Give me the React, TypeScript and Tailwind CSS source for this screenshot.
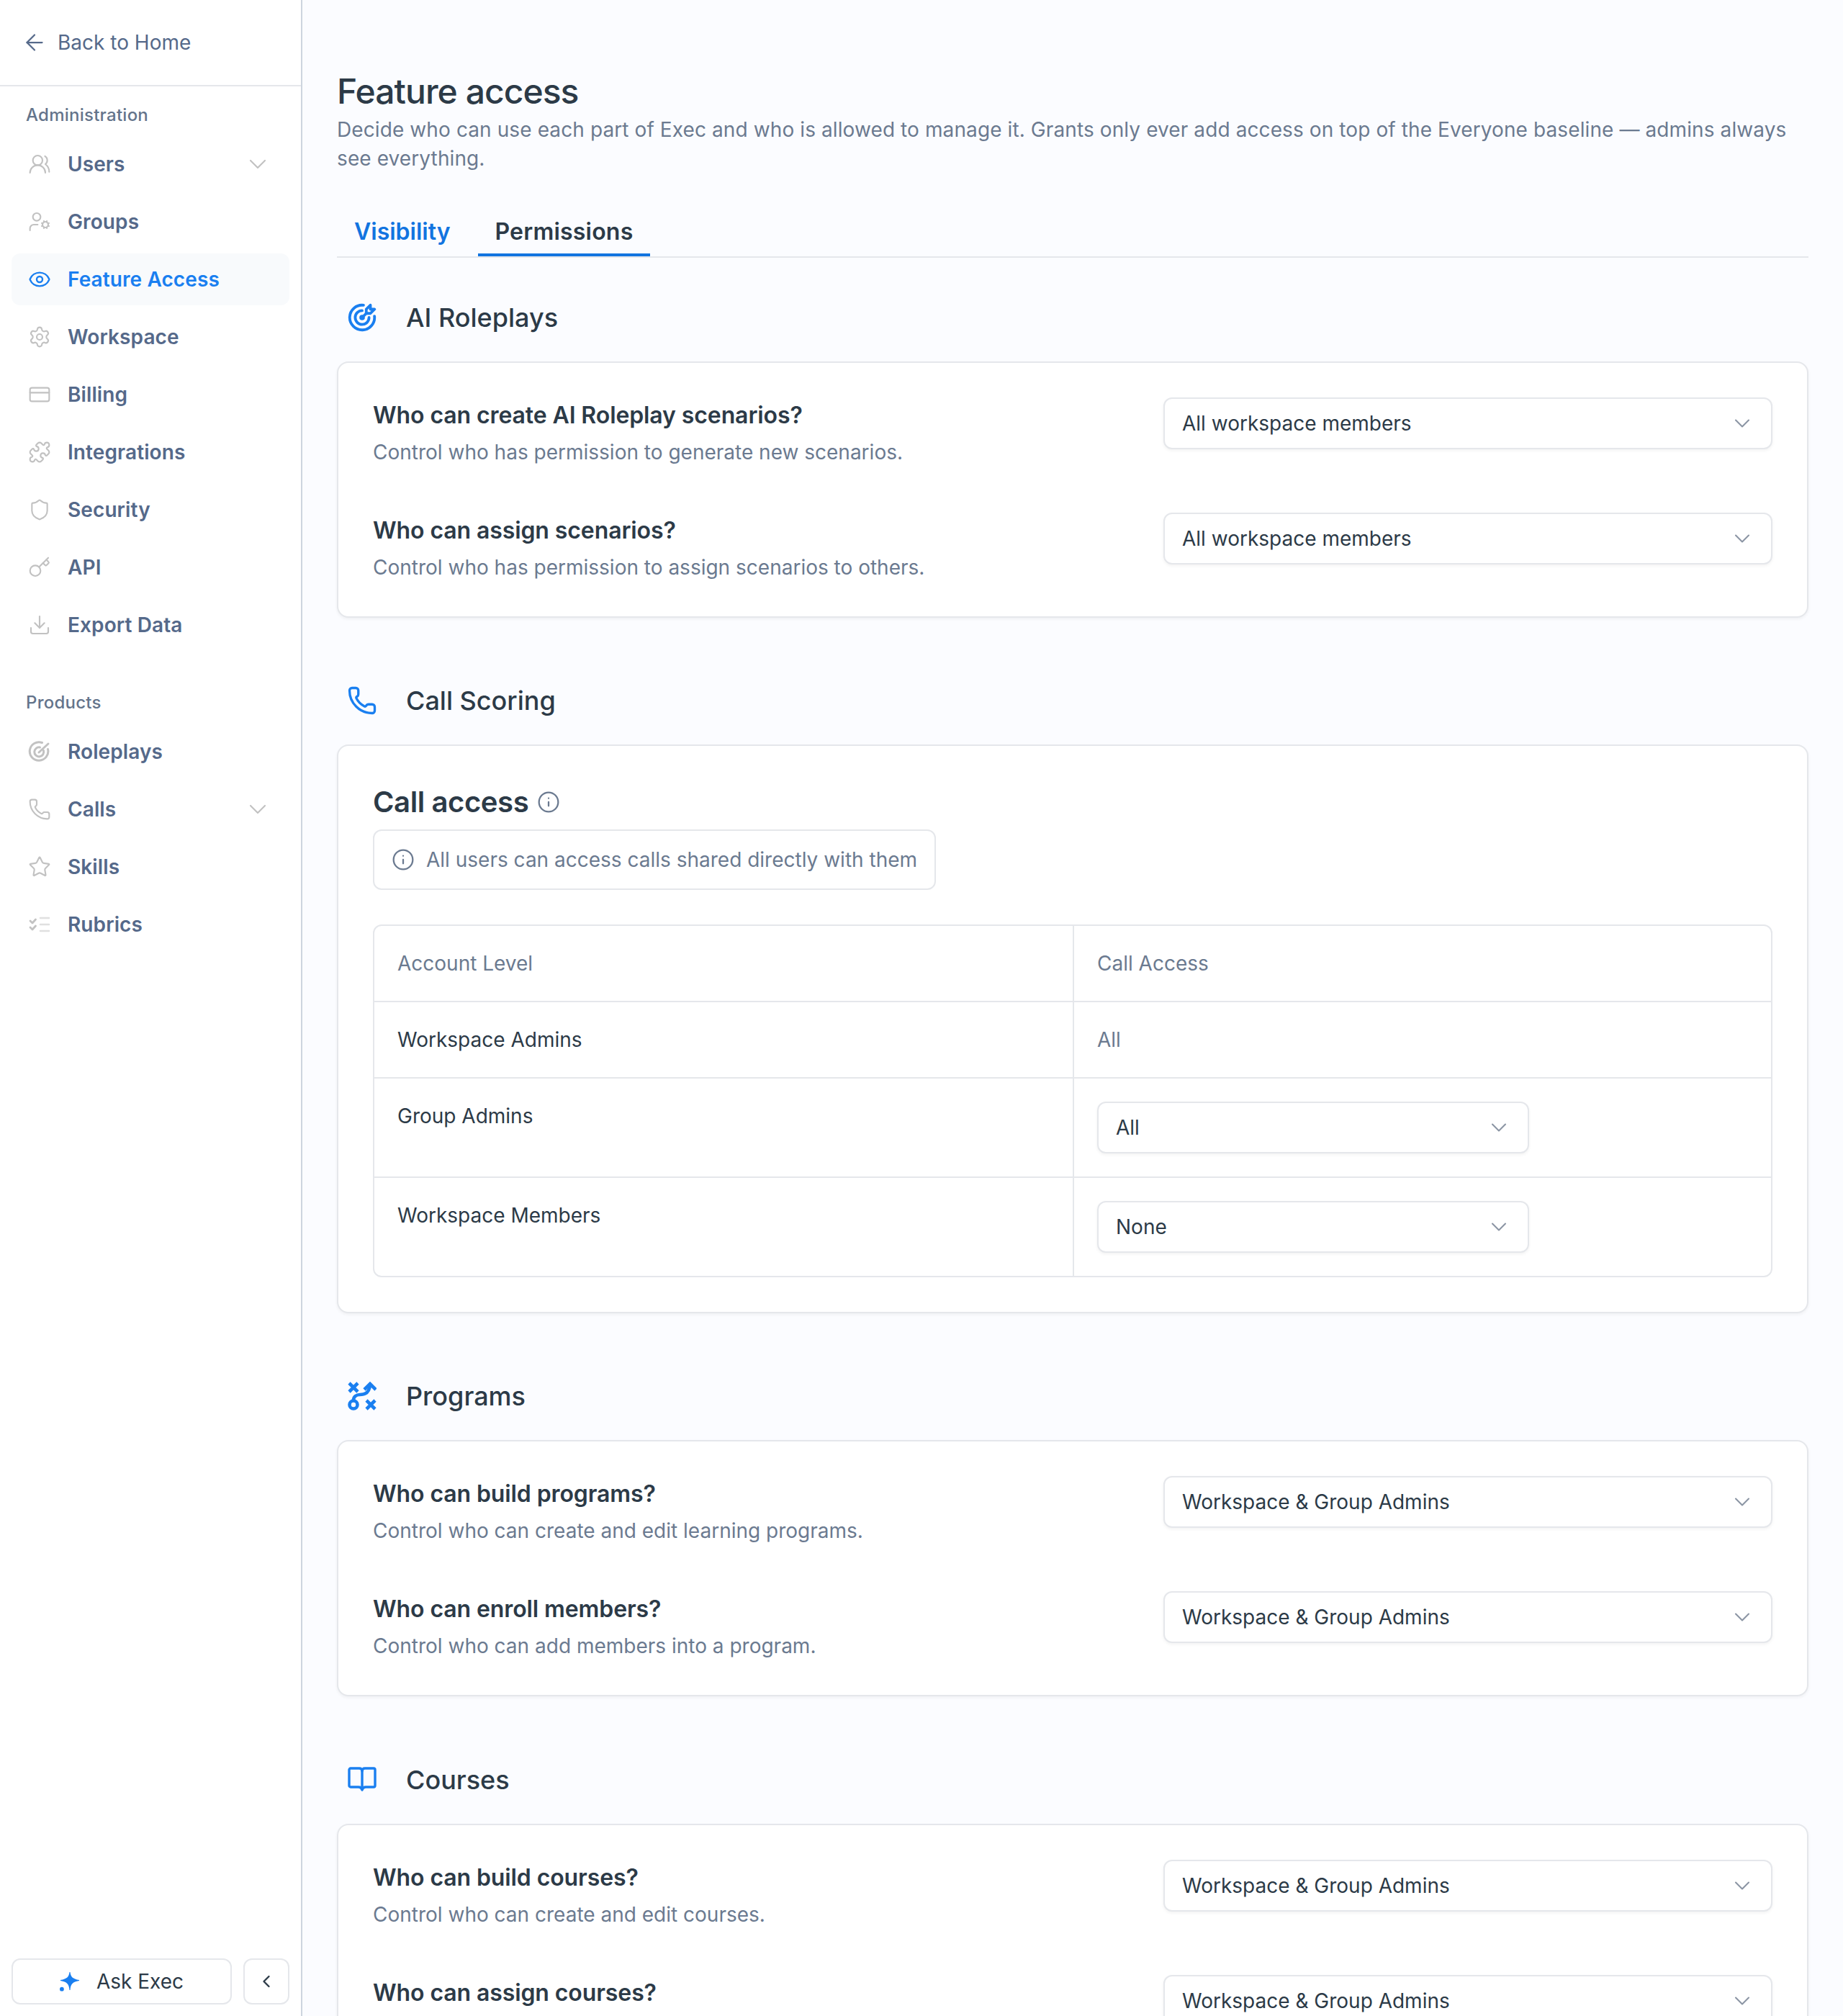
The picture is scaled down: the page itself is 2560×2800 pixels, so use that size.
import React from "react";
import { ArrowLeft, ChevronDown, ChevronLeft, Download, Eye, Info, Key, Phone, Settings, Shield, Star, CreditCard, Puzzle, UserCog, UsersRound } from "lucide-react";
import { TbTargetArrow } from "react-icons/tb";

const RoleIcon = ({ className }: { className?: string }) => (
  <svg viewBox="-1 -1 32 32" fill="none" stroke="currentColor" strokeWidth="3" strokeLinecap="round" strokeLinejoin="round" className={className}>
    <path d="M26.500 11.500A12.800 12.800 0 1 1 18.500 2.500" />
    <path d="M20.500 13.500a6.500 6.500 0 1 1-5-4.500" />
    <path d="M14 16L27 4" />
  </svg>
);

const RubricIcon = ({ className }: { className?: string }) => (
  <svg viewBox="-2 -2 32 32" fill="none" stroke="currentColor" strokeLinecap="round" strokeLinejoin="round" className={className}>
    <path d="M1 9l3 3 4.500-5" strokeWidth="2.800" />
    <path d="M1 18l3 3 4.500-5" strokeWidth="2.800" />
    <path d="M15 5h12M15 14h12M15 23h12" strokeWidth="2.600" className="opacity-50" />
  </svg>
);

const ProgramIcon = ({ className }: { className?: string }) => (
  <svg viewBox="0 0 40 40" fill="none" stroke="currentColor" strokeWidth="4.600" strokeLinejoin="miter" className={className}>
    <path d="M2 2l12 12M14 2L2 14" />
    <path d="M26 26l12 12M38 26L26 38" />
    <circle cx="8" cy="32" r="5.500" />
    <path d="M8 26c0-5 4-8 9-8s13-1 14-14" />
    <path d="M23 11l8-8 8 8" />
  </svg>
);

const BookIcon = ({ className }: { className?: string }) => (
  <svg viewBox="0 0 40 36" fill="none" stroke="currentColor" strokeWidth="3.400" strokeLinejoin="round" strokeLinecap="round" className={className}>
    <path d="M4 2h12q4 0 4 4q0-4 4-4h12a2 2 0 0 1 2 2v22a2 2 0 0 1-2 2H25q-4 0-5 4q-1-4-5-4H4a2 2 0 0 1-2-2V4a2 2 0 0 1 2-2z" />
    <path d="M20 6v24" />
  </svg>
);

const Sparkle = ({ className }: { className?: string }) => (
  <svg viewBox="0 0 28 28" fill="currentColor" className={className}>
    <path d="M15 0c.8 7 3.500 9.700 13 11.500v1c-9.500 1.800-12.200 4.500-13 13.500h-1c-.8-9-3.500-11.700-13-13.500v-1C10.500 9.700 13.200 7 14 0z" />
    <circle cx="3" cy="24.500" r="3" />
  </svg>
);

type NavItem = { label: string; icon: React.ReactNode; chevron?: boolean; active?: boolean };
const ic = "w-[32px] h-[32px]";
const adminItems: NavItem[] = [
  { label: "Users", icon: <UsersRound className={ic} strokeWidth={1.6} />, chevron: true },
  { label: "Groups", icon: <UserCog className={ic} strokeWidth={1.6} /> },
  { label: "Feature Access", icon: <Eye className={ic} strokeWidth={1.8} />, active: true },
  { label: "Workspace", icon: <Settings className={ic} strokeWidth={1.6} /> },
  { label: "Billing", icon: <CreditCard className={ic} strokeWidth={1.6} /> },
  { label: "Integrations", icon: <Puzzle className={ic} strokeWidth={1.6} /> },
  { label: "Security", icon: <Shield className={ic} strokeWidth={1.6} /> },
  { label: "API", icon: <Key className={ic} strokeWidth={1.6} /> },
  { label: "Export Data", icon: <Download className={ic} strokeWidth={1.6} /> },
];
const productItems: NavItem[] = [
  { label: "Roleplays", icon: <RoleIcon className={ic} /> },
  { label: "Calls", icon: <Phone className={ic} strokeWidth={1.6} />, chevron: true },
  { label: "Skills", icon: <Star className={ic} strokeWidth={1.6} /> },
  { label: "Rubrics", icon: <RubricIcon className={ic} /> },
];

function Nav({ item }: { item: NavItem }) {
  return (
    <div className={`flex h-[72px] items-center rounded-[12px] pl-[23px] pr-[24px] ${item.active ? "bg-[#f8fafc] text-[#1a7ff0]" : "text-[#55698a]"}`}>
      <span className={`flex w-[32px] shrink-0 ${item.active ? "text-[#1a7ff0]" : "text-[#c2c2c2]"}`}>{item.icon}</span>
      <span className="ml-[23px] flex-1 text-[28px] font-semibold leading-[40px] tracking-[0.1px]">{item.label}</span>
      {item.chevron && <ChevronDown className="h-[40px] w-[40px] text-[#c2c2c2]" strokeWidth={1.3} />}
    </div>
  );
}

function Select({ value, wide }: { value: string; wide?: boolean }) {
  return (
    <div className={`flex h-[72px] shrink-0 items-center justify-between rounded-[12px] border-2 border-[#e5e7eb] bg-white pl-[24px] pr-[22px] shadow-[0_2px_4px_rgba(0,0,0,0.05)] ${wide ? "w-[846px]" : "w-[600px]"}`}>
      <span className="text-[28px] leading-[40px] text-[#2c3a47]">{value}</span>
      <ChevronDown className="h-[36px] w-[36px] text-[#8a94a3]" strokeWidth={1.4} />
    </div>
  );
}

function Question({ title, desc, value }: { title: string; desc?: string; value: string }) {
  return (
    <div className="flex h-[96px] justify-between">
      <div>
        <div className="text-[32px] font-semibold leading-[50px] tracking-[-0.1px] text-[#2c3a47]">{title}</div>
        {desc && <div className="mt-[6px] text-[28px] leading-[40px] text-[#6b7a90]">{desc}</div>}
      </div>
      <Select value={value} wide />
    </div>
  );
}

function Section({ icon, title, top, children }: { icon: React.ReactNode; title: string; top: string; children: React.ReactNode }) {
  return (
    <section className={top}>
      <div className="flex h-[48px] items-center">
        <span className="flex w-[96px] shrink-0 justify-center pr-[26px] text-[#1a7ff0]">{icon}</span>
        <h2 className="text-[36px] font-medium leading-[48px] text-[#2c3a47]">{title}</h2>
      </div>
      <div className="mt-[37px] rounded-[16px] border-2 border-[#e5e7eb] bg-white p-[48px] shadow-[0_2px_4px_rgba(0,0,0,0.05)]">{children}</div>
    </section>
  );
}

function Cell({ children, muted, right }: { children: React.ReactNode; muted?: boolean; right?: boolean }) {
  return (
    <div className={`p-[32px] text-[28px] leading-[40px] ${muted ? "text-[#6b7a90]" : "text-[#2c3a47]"} ${right ? "border-l-2 border-[#e5e7eb]" : ""}`}>{children}</div>
  );
}

export default function App() {
  return (
    <div className="flex h-[2800px] w-[2560px] overflow-hidden bg-[#fbfcff] font-['Inter',sans-serif]">
      <aside className="flex h-full w-[420px] shrink-0 flex-col border-r-2 border-[#cdd5df] bg-white">
        <div className="flex h-[120px] items-center border-b-2 border-[#e5e7eb] pl-[30px] text-[#55698a]">
          <ArrowLeft className="h-[36px] w-[36px]" strokeWidth={1.5} />
          <span className="ml-[14px] text-[28px] leading-[40px]">Back to Home</span>
        </div>
        <div className="flex flex-1 flex-col px-[16px]">
          <div className="mt-[24px] pl-[20px] text-[24px] font-medium leading-[32px] tracking-[0.25px] text-[#64748b]">Administration</div>
          <div className="mt-[16px] flex flex-col gap-[8px]">
            {adminItems.map((i) => <Nav key={i.label} item={i} />)}
          </div>
          <div className="mt-[56px] pl-[20px] text-[24px] font-medium leading-[32px] tracking-[0.25px] text-[#64748b]">Products</div>
          <div className="mt-[16px] flex flex-col gap-[8px]">
            {productItems.map((i) => <Nav key={i.label} item={i} />)}
          </div>
          <div className="mt-auto mb-[16px] flex gap-[16px]">
            <div className="flex h-[64px] w-[306px] items-center justify-center rounded-[12px] border-2 border-[#e5e7eb] bg-white text-[28px] text-[#2c3a47]">
              <Sparkle className="h-[27px] w-[27px] text-[#1a7ff0]" />
              <span className="ml-[24px]">Ask Exec</span>
            </div>
            <div className="flex h-[64px] w-[64px] items-center justify-center rounded-[12px] border-2 border-[#e5e7eb] bg-white text-[#2c3a47]">
              <ChevronLeft className="h-[28px] w-[28px]" strokeWidth={2} />
            </div>
          </div>
        </div>
      </aside>
      <main className="min-w-0 flex-1 pl-[48px] pr-[48px]">
        <h1 className="mt-[97px] text-[48px] font-medium leading-[60px] tracking-[-0.02em] text-[#2c3a47]">Feature access</h1>
        <p className="mt-[3px] text-[28px] leading-[40px] tracking-[0.1px] text-[#6b7a90]">Decide who can use each part of Exec and who is allowed to manage it. Grants only ever add access on top of the Everyone baseline — admins always see everything.</p>
        <div className="mt-[56px] flex h-[62px] gap-[14px] border-b-2 border-[#e5e7eb]">
          <div className="flex h-[60px] items-center border-b-[4px] border-transparent px-[24px] pb-[4px] text-[32px] font-semibold text-[#1274e0]">Visibility</div>
          <div className="flex h-[60px] items-center border-b-[4px] border-[#1274e0] px-[24px] pb-[4px] text-[32px] font-semibold tracking-[0.2px] text-[#2c3a47]">Permissions</div>
        </div>
        <Section top="mt-[59px]" title="AI Roleplays" icon={<TbTargetArrow className="h-[46px] w-[46px]" />}>
          <div className="flex flex-col gap-[64px]">
            <Question title="Who can create AI Roleplay scenarios?" desc="Control who has permission to generate new scenarios." value="All workspace members" />
            <Question title="Who can assign scenarios?" desc="Control who has permission to assign scenarios to others." value="All workspace members" />
          </div>
        </Section>
        <Section top="mt-[91px]" title="Call Scoring" icon={<Phone className="h-[42px] w-[42px]" strokeWidth={1.9} />}>
          <div className="flex h-[56px] items-center pt-[4px]">
            <span className="text-[40px] font-semibold leading-[52px] tracking-[-0.01em] text-[#2c3a47]">Call access</span>
            <Info className="ml-[12px] h-[32px] w-[32px] text-[#6b7a90]" strokeWidth={1.7} />
          </div>
          <div className="mt-[12px] inline-flex h-[84px] items-center rounded-[12px] border-2 border-[#e5e7eb] px-[24px] text-[28px] text-[#6b7a90]">
            <Info className="mr-[16px] h-[32px] w-[32px]" strokeWidth={1.7} />
            All users can access calls shared directly with them
          </div>
          <div className="mt-[48px] grid grid-cols-[970px_1fr] rounded-[12px] border-2 border-[#e5e7eb]">
            <Cell muted>Account Level</Cell>
            <Cell muted right>Call Access</Cell>
            <div className="col-span-2 h-[2px] bg-[#e5e7eb]" />
            <Cell>Workspace Admins</Cell>
            <Cell muted right>All</Cell>
            <div className="col-span-2 h-[2px] bg-[#e5e7eb]" />
            <Cell>Group Admins</Cell>
            <Cell right><Select value="All" /></Cell>
            <div className="col-span-2 h-[2px] bg-[#e5e7eb]" />
            <Cell>Workspace Members</Cell>
            <Cell right><Select value="None" /></Cell>
          </div>
        </Section>
        <Section top="mt-[91px]" title="Programs" icon={<ProgramIcon className="h-[40px] w-[40px]" />}>
          <div className="flex flex-col gap-[64px]">
            <Question title="Who can build programs?" desc="Control who can create and edit learning programs." value="Workspace & Group Admins" />
            <Question title="Who can enroll members?" desc="Control who can add members into a program." value="Workspace & Group Admins" />
          </div>
        </Section>
        <Section top="mt-[92px]" title="Courses" icon={<BookIcon className="h-[36px] w-[40px]" />}>
          <div className="flex flex-col gap-[64px]">
            <Question title="Who can build courses?" desc="Control who can create and edit courses." value="Workspace & Group Admins" />
            <Question title="Who can assign courses?" value="Workspace & Group Admins" />
          </div>
        </Section>
      </main>
    </div>
  );
}
